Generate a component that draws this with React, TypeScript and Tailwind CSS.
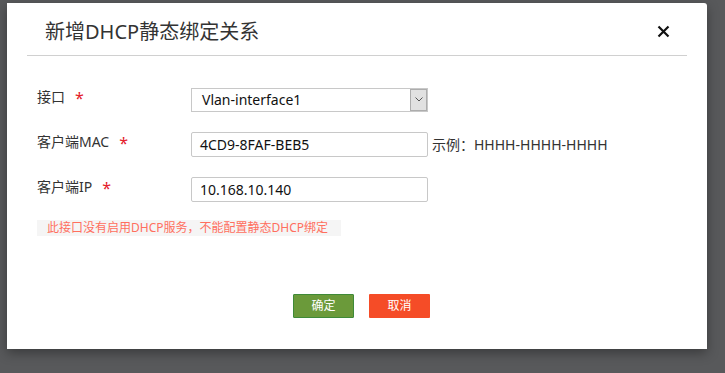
import React from 'react';

const font = { fontFamily: '"Noto Sans", "Noto Sans CJK SC", sans-serif' };

const Field: React.FC<{ label: string; children: React.ReactNode }> = ({ label, children }) => (
    <div className="flex items-center h-[25px]">
        <div className="w-[154px] flex items-center text-[14px] text-[#333] -mt-[6px]">
            <span>{label}</span>
            <span className="text-[#e4202a] text-[16px] ml-[10px] leading-none mt-[3px]">*</span>
        </div>
        {children}
    </div>
);

const App: React.FC = () => {
    return (
        <div className="w-[725px] h-[373px] bg-[#58595b] overflow-hidden" style={font}>
            <div className="ml-[7px] mt-[3px] w-[700px] h-[346px] bg-white rounded-tr-[3px] shadow-[0_4px_12px_rgba(0,0,0,0.35)] flex flex-col">
                <div className="mx-5 h-[53px] border-b border-[#d0d0d0] flex items-center justify-between pl-[18px] pr-[17px]">
                    <h2 className="text-[20px] text-[#333] leading-none mt-[6px]">新增DHCP静态绑定关系</h2>
                    <svg width="13" height="13" viewBox="0 0 13 13" className="mt-[5px]">
                        <path d="M1.5 1.5 L11.5 11.5 M11.5 1.5 L1.5 11.5" stroke="#111" strokeWidth="2.2" />
                    </svg>
                </div>

                <div className="pl-[30px] pt-[31px] flex flex-col gap-[20px]">
                    <Field label="接口">
                        <div className="w-[237px] h-[24px] border border-[#c8c8c8] flex items-center justify-between">
                            <span className="pl-[10px] text-[14px] text-[#111]">Vlan-interface1</span>
                            <div className="w-[17px] h-[22px] bg-[#e1e1e1] border border-[#adadad] flex items-center justify-center">
                                <svg width="8" height="5" viewBox="0 0 8 5">
                                    <path d="M0.5 0.5 L4 4 L7.5 0.5" stroke="#555" strokeWidth="1" fill="none" />
                                </svg>
                            </div>
                        </div>
                    </Field>
                    <Field label="客户端MAC">
                        <div className="w-[237px] h-[25px] border border-[#c8c8c8] rounded-[2px] flex items-center pl-[8px] text-[14px] text-[#111]">
                            4CD9-8FAF-BEB5
                        </div>
                        <span className="ml-[4px] text-[14px] text-[#333]">示例：HHHH-HHHH-HHHH</span>
                    </Field>
                    <Field label="客户端IP">
                        <div className="w-[237px] h-[25px] border border-[#c8c8c8] rounded-[2px] flex items-center pl-[8px] text-[14px] text-[#111]">
                            10.168.10.140
                        </div>
                    </Field>
                    <div className="mt-[-2px] w-[304px] h-[16px] bg-[#f5f5f5] flex items-center pl-[10px] text-[12px] text-[#ff6f5e]">
                        此接口没有启用DHCP服务，不能配置静态DHCP绑定
                    </div>
                </div>

                <div className="mt-[58px] pl-[286px] flex gap-[15px]">
                    <button className="w-[61px] h-[24px] bg-[#6b9a3a] border border-[#3f8a38] text-white text-[12px] rounded-[1px]">确定</button>
                    <button className="w-[61px] h-[24px] bg-[#f54c27] text-white text-[12px] rounded-[1px]">取消</button>
                </div>
            </div>
        </div>
    );
};

export default App;
